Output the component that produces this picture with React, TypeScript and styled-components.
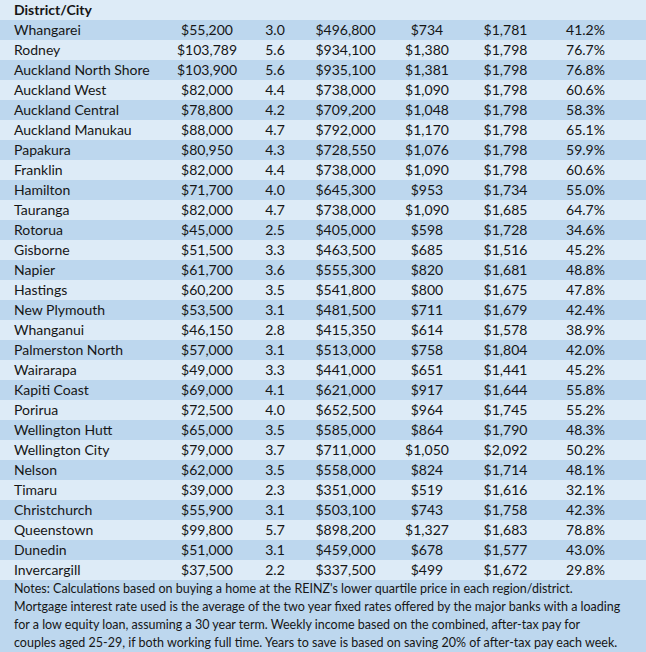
import React from "react";
import styled, { createGlobalStyle } from "styled-components";

const Global = createGlobalStyle`
  html, body { margin: 0; padding: 0; background: #ddebf7; }
  body { font-family: "Lato", "Liberation Sans", sans-serif; }
`;

const COLS = "170px 74px 62px 79px 84px 73px 87px 1fr";

const Sheet = styled.div`
  width: 646px;
  height: 652px;
  overflow: hidden;
  background: #ddebf7;
  color: #161616;
  font-size: 14px;
`;

const Row = styled.div<{ $dark?: boolean }>`
  display: grid;
  grid-template-columns: ${COLS};
  height: 20px;
  line-height: 20px;
  background: ${(p) => (p.$dark ? "#bdd7ee" : "#ddebf7")};
`;

const NameCell = styled.div<{ $bold?: boolean }>`
  padding-left: 14px;
  white-space: nowrap;
  font-weight: ${(p) => (p.$bold ? 700 : 400)};
`;

const NumCell = styled.div`
  text-align: center;
  white-space: nowrap;
`;

const Notes = styled.div`
  background: #bdd7ee;
  padding-left: 14px;
  font-size: 12.5px;
  line-height: 18px;
  height: 72px;
`;

const NoteLine = styled.div`
  white-space: nowrap;
`;

const data: string[][] = [
  ["Whangarei", "$55,200", "3.0", "$496,800", "$734", "$1,781", "41.2%"],
  ["Rodney", "$103,789", "5.6", "$934,100", "$1,380", "$1,798", "76.7%"],
  ["Auckland North Shore", "$103,900", "5.6", "$935,100", "$1,381", "$1,798", "76.8%"],
  ["Auckland West", "$82,000", "4.4", "$738,000", "$1,090", "$1,798", "60.6%"],
  ["Auckland Central", "$78,800", "4.2", "$709,200", "$1,048", "$1,798", "58.3%"],
  ["Auckland Manukau", "$88,000", "4.7", "$792,000", "$1,170", "$1,798", "65.1%"],
  ["Papakura", "$80,950", "4.3", "$728,550", "$1,076", "$1,798", "59.9%"],
  ["Franklin", "$82,000", "4.4", "$738,000", "$1,090", "$1,798", "60.6%"],
  ["Hamilton", "$71,700", "4.0", "$645,300", "$953", "$1,734", "55.0%"],
  ["Tauranga", "$82,000", "4.7", "$738,000", "$1,090", "$1,685", "64.7%"],
  ["Rotorua", "$45,000", "2.5", "$405,000", "$598", "$1,728", "34.6%"],
  ["Gisborne", "$51,500", "3.3", "$463,500", "$685", "$1,516", "45.2%"],
  ["Napier", "$61,700", "3.6", "$555,300", "$820", "$1,681", "48.8%"],
  ["Hastings", "$60,200", "3.5", "$541,800", "$800", "$1,675", "47.8%"],
  ["New Plymouth", "$53,500", "3.1", "$481,500", "$711", "$1,679", "42.4%"],
  ["Whanganui", "$46,150", "2.8", "$415,350", "$614", "$1,578", "38.9%"],
  ["Palmerston North", "$57,000", "3.1", "$513,000", "$758", "$1,804", "42.0%"],
  ["Wairarapa", "$49,000", "3.3", "$441,000", "$651", "$1,441", "45.2%"],
  ["Kapiti Coast", "$69,000", "4.1", "$621,000", "$917", "$1,644", "55.8%"],
  ["Porirua", "$72,500", "4.0", "$652,500", "$964", "$1,745", "55.2%"],
  ["Wellington Hutt", "$65,000", "3.5", "$585,000", "$864", "$1,790", "48.3%"],
  ["Wellington City", "$79,000", "3.7", "$711,000", "$1,050", "$2,092", "50.2%"],
  ["Nelson", "$62,000", "3.5", "$558,000", "$824", "$1,714", "48.1%"],
  ["Timaru", "$39,000", "2.3", "$351,000", "$519", "$1,616", "32.1%"],
  ["Christchurch", "$55,900", "3.1", "$503,100", "$743", "$1,758", "42.3%"],
  ["Queenstown", "$99,800", "5.7", "$898,200", "$1,327", "$1,683", "78.8%"],
  ["Dunedin", "$51,000", "3.1", "$459,000", "$678", "$1,577", "43.0%"],
  ["Invercargill", "$37,500", "2.2", "$337,500", "$499", "$1,672", "29.8%"],
];

const notes = [
  "Notes: Calculations based on buying a home at the REINZ's lower quartile price in each region/district.",
  "Mortgage interest rate used is the average of the two year fixed rates offered by the major banks with a loading",
  "for a low equity loan, assuming a 30 year term. Weekly income based on the combined, after-tax pay for",
  "couples aged 25-29, if both working full time. Years to save is based on saving 20% of after-tax pay each week.",
];

export default function App() {
  return (
    <>
      <Global />
      <Sheet>
        <Row>
          <NameCell $bold>District/City</NameCell>
        </Row>
        {data.map((r, i) => (
          <Row key={r[0]} $dark={i % 2 === 0}>
            <NameCell>{r[0]}</NameCell>
            {r.slice(1).map((v, j) => (
              <NumCell key={j}>{v}</NumCell>
            ))}
          </Row>
        ))}
        <Notes>
          {notes.map((n) => (
            <NoteLine key={n}>{n}</NoteLine>
          ))}
        </Notes>
      </Sheet>
    </>
  );
}
